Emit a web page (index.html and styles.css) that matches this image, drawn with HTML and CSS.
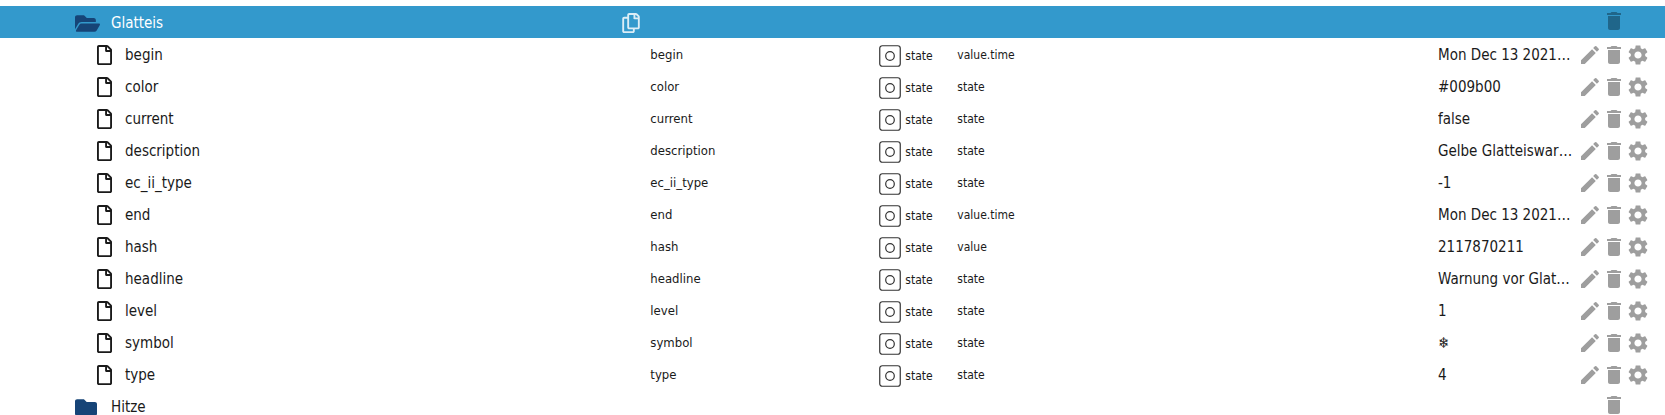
FILE: index.html
```
<!DOCTYPE html>
<html lang="de">
<head>
<meta charset="utf-8">
<meta name="viewport" content="width=device-width, initial-scale=1">
<title>Objects</title>
<link rel="stylesheet" href="styles.css">
</head>
<body>
<svg class="sprite" aria-hidden="true">
  <symbol id="file" viewBox="0 0 384 512"><path d="M369.9 97.9L286 14C277 5 264.8 0 252.1 0H48C21.5 0 0 21.5 0 48v416c0 26.5 21.5 48 48 48h288c26.5 0 48-21.5 48-48V131.9c0-12.7-5.1-25-14.1-34zM332.1 128H256V51.9l76.1 76.1zM48 464V48h160v104c0 13.3 10.7 24 24 24h104v288H48z"/></symbol>
  <symbol id="folder-open" viewBox="0 64 576 384"><path d="M572.694 292.093L500.27 416.248A63.997 63.997 0 0 1 444.989 448H45.025c-18.523 0-30.064-20.093-20.731-36.093l72.424-124.155A64 64 0 0 1 152 256h399.964c18.523 0 30.064 20.093 20.73 36.093zM152 224h328v-48c0-26.51-21.49-48-48-48H272l-64-64H48C21.49 64 0 85.49 0 112v278.046l69.077-118.418C86.214 242.25 117.989 224 152 224z"/></symbol>
  <symbol id="folder" viewBox="0 64 512 384"><path d="M464 128H272l-64-64H48C21.49 64 0 85.49 0 112v288c0 26.51 21.49 48 48 48h416c26.51 0 48-21.49 48-48V176c0-26.51-21.49-48-48-48z"/></symbol>
  <symbol id="copy" viewBox="0 0 448 512"><path d="M433.941 65.941l-51.882-51.882A48 48 0 0 0 348.118 0H176c-26.51 0-48 21.49-48 48v48H48c-26.51 0-48 21.49-48 48v320c0 26.51 21.49 48 48 48h224c26.51 0 48-21.49 48-48v-48h80c26.51 0 48-21.49 48-48V99.882a48 48 0 0 0-14.059-33.941zM266 464H54a6 6 0 0 1-6-6V150a6 6 0 0 1 6-6h74v224c0 26.51 21.49 48 48 48h96v42a6 6 0 0 1-6 6zm128-96H182a6 6 0 0 1-6-6V54a6 6 0 0 1 6-6h106v88c0 13.255 10.745 24 24 24h88v202a6 6 0 0 1-6 6zm6-256h-64V48h9.632c1.591 0 3.117.632 4.243 1.757l48.368 48.368a6 6 0 0 1 1.757 4.243V112z"/></symbol>
  <symbol id="state" viewBox="0 0 22 22"><rect x="0.75" y="0.75" width="20.5" height="20.5" rx="2.5" fill="none" stroke="currentColor" stroke-width="1.2"/><circle cx="11" cy="11" r="4.3" fill="none" stroke="currentColor" stroke-width="1.2"/></symbol>
  <symbol id="edit" viewBox="0 0 24 24"><path d="M3 17.25V21h3.75L17.81 9.94l-3.75-3.75L3 17.25zM20.71 7.04c.39-.39.39-1.02 0-1.41l-2.34-2.34a.9959.9959 0 0 0-1.41 0l-1.83 1.83 3.75 3.75 1.83-1.83z"/></symbol>
  <symbol id="trash" viewBox="0 0 24 24"><path d="M6 19c0 1.1.9 2 2 2h8c1.100 0 2-.9 2-2V7H6v12zM19 4h-3.500l-1-1h-5l-1 1H5v2h14V4z"/></symbol>
  <symbol id="gear" viewBox="0 0 24 24"><path d="M19.140 12.940c.04-.3.06-.61.06-.94 0-.32-.02-.64-.07-.94l2.030-1.580c.18-.14.23-.41.12-.61l-1.920-3.320c-.12-.22-.37-.29-.59-.22l-2.390.96c-.5-.38-1.030-.7-1.620-.94l-.36-2.540c-.04-.24-.24-.41-.48-.41h-3.840c-.24 0-.43.17-.47.41l-.36 2.540c-.59.24-1.130.57-1.620.94l-2.390-.96c-.22-.08-.47 0-.59.22L2.740 8.870c-.12.21-.08.47.12.61l2.030 1.580c-.05.3-.09.63-.09.94s.02.64.07.94l-2.030 1.580c-.18.14-.23.41-.12.61l1.920 3.320c.12.22.37.29.59.22l2.390-.96c.5.38 1.030.7 1.620.94l.36 2.540c.05.24.24.41.48.41h3.840c.24 0 .44-.17.47-.41l.36-2.540c.59-.24 1.130-.56 1.620-.94l2.390.96c.22.08.47 0 .59-.22l1.920-3.320c.12-.22.07-.47-.12-.61l-2.010-1.580zM12 15.600c-1.980 0-3.600-1.620-3.600-3.600s1.620-3.600 3.600-3.600 3.600 1.620 3.600 3.600-1.620 3.600-3.600 3.600z"/></symbol>
</svg>
<main class="tree">
  <table class="objects">
    <colgroup>
      <col class="col-name"><col class="col-label"><col class="col-type"><col class="col-role"><col class="col-value"><col class="col-actions">
    </colgroup>
    <tbody id="rows"></tbody>
  </table>
</main>
<script src="tree.js"></script>
</body>
</html>
```
FILE: styles.css
```
body {
  margin: 0;
  background: #fff;
  color: #1a1a1a;
  font-family: "DejaVu Sans Condensed", "Noto Sans", sans-serif;
  font-size: 15px;
}

.sprite {
  display: none;
}

.tree {
  height: 100vh;
  box-sizing: border-box;
  padding-top: 6px;
  overflow: hidden;
}

.objects {
  width: 100%;
  table-layout: fixed;
  border-collapse: collapse;
}

.col-name { width: 39%; }
.col-label { width: 230px; }
.col-type { width: 78px; }
.col-value { width: 140px; }
.col-actions { width: 87px; }

.objects td {
  box-sizing: border-box;
  height: 32px;
  padding: 2px 0 0;
  line-height: 20px;
  white-space: nowrap;
  overflow: hidden;
  vertical-align: middle;
}

.objects .label {
  padding-left: 1px;
  font-size: 13px;
}

.objects .type,
.objects .role { font-size: 12px; }

svg {
  display: block;
  flex: none;
  fill: currentColor;
}

.cell {
  display: flex;
  align-items: center;
}

.name .cell {
  gap: 13px;
  padding-left: 97px;
}

.folder .name .cell {
  gap: 0;
  padding-left: 75px;
}

.folder-icon {
  width: 36px;
  color: #164477;
}

.icon-file { width: 15px; height: 20px; }
.icon-folder-open { width: 25px; height: 17px; }
.icon-folder { width: 22px; height: 17px; }
.icon-copy { width: 18px; height: 20px; }

.icon-state {
  width: 22px;
  height: 22px;
  color: #333;
}

.type .cell {
  gap: 4px;
  padding-top: 2px;
}

.value {
  text-overflow: ellipsis;
}

button {
  border: 0;
  padding: 0;
  background: none;
  color: inherit;
  cursor: pointer;
}

.copy {
  margin-left: auto;
  margin-right: 9px;
  color: #dcedf6;
}

.actions .cell {
  color: #9e9e9e;
}

.actions svg {
  width: 24px;
  height: 24px;
}

.folder .actions .cell {
  padding-bottom: 4px;
  padding-left: 24px;
}

.selected {
  background: #3399cc;
  color: #fff;
}

.selected .actions .cell {
  color: #20668a;
}
```
FILE: tree.js
```
const states = [
  ["begin", "value.time", "Mon Dec 13 2021…"],
  ["color", "state", "#009b00"],
  ["current", "state", "false"],
  ["description", "state", "Gelbe Glatteiswar…"],
  ["ec_ii_type", "state", "-1"],
  ["end", "value.time", "Mon Dec 13 2021…"],
  ["hash", "value", "2117870211"],
  ["headline", "state", "Warnung vor Glat…"],
  ["level", "state", "1"],
  ["symbol", "state", "❄"],
  ["type", "state", "4"]
];

const icon = (name) => `<svg class="icon-${name}" aria-hidden="true"><use href="#${name}"/></svg>`;
const button = (name, label, cls = "") => `<button type="button" class="${cls}" aria-label="${label}">${icon(name)}</button>`;

const folderRow = (name, glyph, selected) => `
  <tr class="folder${selected ? " selected" : ""}">
    <td class="name"><div class="cell"><span class="folder-icon">${icon(glyph)}</span>${name}${selected ? button("copy", "Copy " + name, "copy") : ""}</div></td>
    <td></td><td></td><td></td><td></td>
    <td class="actions"><div class="cell">${button("trash", "Delete " + name)}</div></td>
  </tr>`;

const stateRow = ([name, role, value]) => `
  <tr>
    <td class="name"><div class="cell">${icon("file")}${name}</div></td>
    <td class="label">${name}</td>
    <td class="type"><div class="cell">${icon("state")}state</div></td>
    <td class="role">${role}</td>
    <td class="value">${value}</td>
    <td class="actions"><div class="cell">${button("edit", "Edit " + name)}${button("trash", "Delete " + name)}${button("gear", "Settings for " + name)}</div></td>
  </tr>`;

document.getElementById("rows").innerHTML =
  folderRow("Glatteis", "folder-open", true) +
  states.map(stateRow).join("") +
  folderRow("Hitze", "folder", false);
```
